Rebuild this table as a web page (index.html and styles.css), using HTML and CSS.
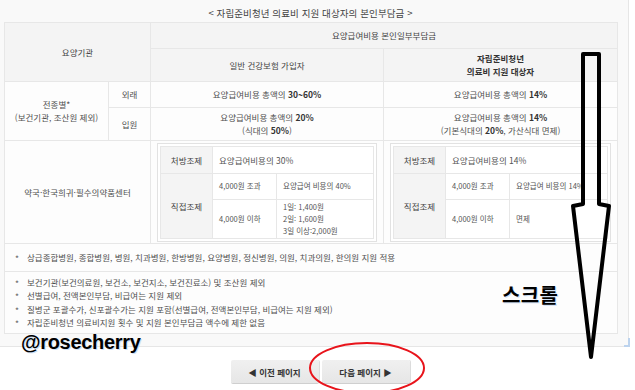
FILE: index.html
```html
<!DOCTYPE html>
<html lang="ko">
<head>
<meta charset="utf-8">
<link rel="stylesheet" href="styles.css">
</head>
<body>
<div class="page">
  <div class="panel">
    <div class="title">&lt; 자립준비청년 의료비 지원 대상자의 본인부담금 &gt;</div>
    <table class="main">
      <colgroup><col class="c1"><col class="c2"><col class="c3"><col class="c4"></colgroup>
      <tr class="h1">
        <th rowspan="2" colspan="2">요양기관</th>
        <th colspan="2">요양급여비용 본인일부부담금</th>
      </tr>
      <tr class="h2">
        <th>일반 건강보험 가입자</th>
        <th class="strong">자립준비청년<br>의료비 지원 대상자</th>
      </tr>
      <tr class="r1">
        <td rowspan="2">전종별*<br>(보건기관, 조산원 제외)</td>
        <td>외래</td>
        <td>요양급여비용 총액의 <b>30~60%</b></td>
        <td>요양급여비용 총액의 <b>14%</b></td>
      </tr>
      <tr class="r2">
        <td>입원</td>
        <td>요양급여비용 총액의 <b>20%</b><br>(식대의 <b>50%</b>)</td>
        <td>요양급여비용 총액의 <b>14%</b><br>(기본식대의 <b>20%</b>, 가산식대 면제)</td>
      </tr>
      <tr class="r3">
        <td colspan="2">약국·한국희귀·필수의약품센터</td>
        <td class="nestcell">
          <div class="nestbox">
            <table class="nest">
              <colgroup><col class="n1"><col class="n2"><col class="n3"></colgroup>
              <tr class="nr1"><th>처방조제</th><td colspan="2">요양급여비용의 30%</td></tr>
              <tr class="nr2"><th rowspan="2">직접조제</th><td class="sm">4,000원 조과</td><td class="sm">요양급여 비용의 40%</td></tr>
              <tr class="nr3"><td class="sm">4,000원 이하</td><td class="sm lh">1일: 1,400원<br>2일: 1,600원<br>3일 이상:2,000원</td></tr>
            </table>
          </div>
        </td>
        <td class="nestcell">
          <div class="nestbox">
            <table class="nest">
              <colgroup><col class="n1"><col class="n2"><col class="n3"></colgroup>
              <tr class="nr1"><th>처방조제</th><td colspan="2">요양급여비용의 14%</td></tr>
              <tr class="nr2"><th rowspan="2">직접조제</th><td class="sm">4,000원 조과</td><td class="sm">요양급여 비용의 14%</td></tr>
              <tr class="nr3"><td class="sm">4,000원 이하</td><td class="sm">면제</td></tr>
            </table>
          </div>
        </td>
      </tr>
      <tr class="r4">
        <td colspan="4" class="notes">
          <ul><li>상급종합병원, 종합병원, 병원, 치과병원, 한방병원, 요양병원, 정신병원, 의원, 치과의원, 한의원 지원 적용</li></ul>
        </td>
      </tr>
      <tr class="r5">
        <td colspan="4" class="notes">
          <ul>
            <li>보건기관(보건의료원, 보건소, 보건지소, 보건진료소) 및 조산원 제외</li>
            <li>선별급여, 전액본인부담, 비급여는 지원 제외</li>
            <li>질병군 포괄수가, 신포괄수가는 지원 포함(선별급여, 전액본인부담, 비급여는 지원 제외)</li>
            <li>자립준비청년 의료비지원 횟수 및 지원 본인부담금 액수에 제한 없음</li>
          </ul>
        </td>
      </tr>
    </table>
  </div>
  <div class="pager">
    <button class="btn">◀ 이전 페이지</button>
    <button class="btn">다음 페이지 ▶</button>
  </div>

  <div class="corner"></div>
  <div class="tag">@rosecherry</div>
  <div class="scroll">스크롤</div>
  <svg class="ellipse" width="124" height="56" viewBox="0 0 124 56"><ellipse cx="62" cy="28" rx="57" ry="25" fill="none" stroke="#e8141b" stroke-width="2"/></svg>
  <svg class="arrow" width="50" height="320" viewBox="0 0 50 320"><polygon points="12,2 28,2 28,152 38,154 20,305 2,154 12,152" fill="none" stroke="#000" stroke-width="4" stroke-linejoin="round"/></svg>
</div>
</body>
</html>
```
FILE: styles.css
```css
* { box-sizing: border-box; }
html, body { margin: 0; padding: 0; background: #fff; }
body { font-family: "Noto Sans CJK KR", "Noto Sans", sans-serif; color: #505050; }
.page { position: relative; width: 635px; height: 390px; overflow: hidden; }
.panel {
  width: 629px; height: 347px;
  background: #f9f9f9;
  border-right: 1px solid #e6e6e6;
  border-bottom: 1px solid #e6e6e6;
  padding: 4px 11px 0 4px;
}
.title { height: 18px; text-align: center; font-size: 9.5px; line-height: 18px; color: #444; letter-spacing: 0.1px; }
table.main { width: 613px; border-collapse: collapse; table-layout: fixed; font-size: 8.5px; }
.c1 { width: 104px; } .c2 { width: 42px; } .c3 { width: 233px; } .c4 { width: 234px; }
table.main th, table.main td {
  border: 1px solid #e7e7e7; text-align: center; vertical-align: middle;
  padding: 0; line-height: 13px; font-weight: normal;
}
table.main > tbody > tr > th { background: #f4f4f4; color: #444; }
table.main > tbody > tr > td { background: #fdfdfd; }
th.strong { font-weight: bold !important; color: #333 !important; }
b { color: #333; font-weight: bold; }
.h1 { height: 26px; } .h2 { height: 33px; }
.r1 { height: 26px; } .r2 { height: 33px; }
.r3 { height: 103px; } .r4 { height: 28px; } .r5 { height: 62px; }
td.nestcell { padding: 0 6px !important; }
.nestbox { border: 1px solid #e2e2e2; padding: 2px; background: #fff; }
table.nest { width: 100%; border-collapse: collapse; table-layout: fixed; }
.n1 { width: 52px; } .n2 { width: 64px; }
table.nest th, table.nest td { border: 1px solid #e7e7e7; font-size: 8.5px; line-height: 12px; padding: 0 6px; text-align: left; background: #fff; color: #555; }
table.nest th { background: #f4f4f4; text-align: center; padding: 0; font-weight: normal; color: #444; }
table.nest td.sm { font-size: 7.5px; }
.nr1 { height: 27px; } .nr2 { height: 26px; } .nr3 { height: 39px; }
td.notes { text-align: left !important; padding: 0 0 0 10px !important; }
td.notes ul { list-style: none; margin: 0; padding: 0; }
td.notes li { position: relative; padding-left: 12px; line-height: 13.5px; font-size: 8.5px; }
td.notes li::before { content: "*"; position: absolute; left: 0; top: 1px; color: #666; }
.pager { display: flex; justify-content: center; gap: 3px; padding: 13px 0 0 5px; }
.btn {
  width: 88px; height: 23px; border: none; border-radius: 2px;
  background: linear-gradient(#f0f0f0, #e6e6e6);
  box-shadow: 0 1px 0 #cfcfcf, 1px 0 0 #dcdcdc;
  font-family: "Noto Sans CJK KR", sans-serif; font-size: 8.5px; font-weight: bold; color: #333;
  padding: 0;
}
.corner { position: absolute; left: 624px; top: 338px; width: 6px; height: 9px; border-right: 2px solid #bcd3ee; border-bottom: 2px solid #bcd3ee; }
.tag { position: absolute; left: 21px; top: 331px; font-family: "Liberation Sans", Arial, sans-serif; font-weight: bold; font-size: 20px; color: #000; text-shadow: 1px 1px 0 #cfe0f5; letter-spacing: -0.3px; }
.scroll { position: absolute; left: 502px; top: 280px; font-family: "Noto Sans CJK KR", sans-serif; font-weight: bold; font-size: 20px; color: #000; letter-spacing: 0.3px; text-shadow: 1px 1px 0 #cfe0f5; }
.ellipse { position: absolute; left: 305px; top: 340px; }
.arrow { position: absolute; left: 571px; top: 52px; }
```
